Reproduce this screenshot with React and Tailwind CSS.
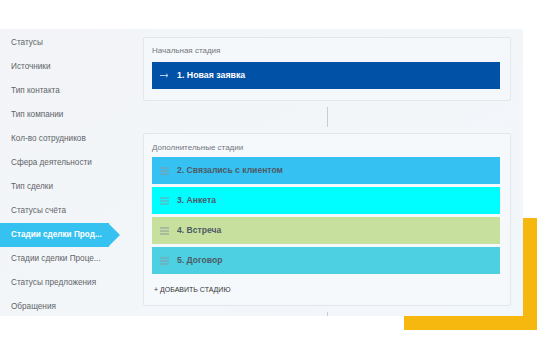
import React from "react";

const menu = [
  "Статусы",
  "Источники",
  "Тип контакта",
  "Тип компании",
  "Кол-во сотрудников",
  "Сфера деятельности",
  "Тип сделки",
  "Статусы счёта",
  "Стадии сделки Прод...",
  "Стадии сделки Проце...",
  "Статусы предложения",
  "Обращения",
];

const stages = [
  { name: "2. Связались с клиентом", color: "bg-[#36c1f3]" },
  { name: "3. Анкета", color: "bg-[#00fdff]" },
  { name: "4. Встреча", color: "bg-[#c7e09d]" },
  { name: "5. Договор", color: "bg-[#4dd0e2]" },
];

const Burger = () => (
  <svg width="9" height="8" viewBox="0 0 9 8" className="shrink-0">
    <path d="M0 1h9M0 4h9M0 7h9" stroke="#8a97a3" strokeWidth="1.1" />
  </svg>
);

const Arrow = () => (
  <svg width="9" height="5" viewBox="0 0 9 5" className="shrink-0">
    <path d="M0 2.5h8M6 0.7l2 1.8-2 1.8" stroke="#c9d8ec" strokeWidth="0.9" fill="none" />
  </svg>
);

const App = () => {
  return (
    <div
      className="relative w-[540px] h-[349px] bg-white overflow-hidden"
      style={{ fontFamily: '"Liberation Sans", Arial, sans-serif' }}
    >
      {/* yellow corner behind the panel */}
      <div className="absolute left-[523px] top-[218px] w-[14px] h-[112px] bg-[#f6b80f]" />
      <div className="absolute left-[404px] top-[316px] w-[133px] h-[14px] bg-[#f6b80f]" />

      <div className="relative mt-[29px] w-[523px] h-[287px] flex bg-gradient-to-br from-[#f2f4f7] via-[#f3f6f9] to-[#f2f7fc] overflow-hidden">
        <div className="w-[130px] shrink-0 pt-[2px]">
          {menu.map((item, i) =>
            i === 8 ? (
              <div key={i} className="relative h-[24px] flex items-center">
                <div className="absolute inset-y-0 left-0 w-[109px] bg-[#35c2f1]" />
                <div className="absolute top-0 left-[108px] w-0 h-0 border-y-[12px] border-y-transparent border-l-[12px] border-l-[#35c2f1]" />
                <span className="relative pl-[11px] text-[8.2px] font-bold text-white whitespace-nowrap">
                  {item}
                </span>
              </div>
            ) : (
              <div
                key={i}
                className="h-[24px] flex items-center pl-[11px] text-[8.2px] text-[#5f6469] whitespace-nowrap"
              >
                {item}
              </div>
            )
          )}
        </div>

        <div className="ml-[13px] pt-[8px] w-[368px] flex flex-col">
          <div className="h-[64px] border border-[#e3e7eb] rounded-[2px] bg-[#f5f8fb] pl-[8px] pr-[10px] flex flex-col">
            <div className="h-[24px] pt-[7px] text-[8px] text-[#72777c]">
              Начальная стадия
            </div>
            <div className="h-[27px] bg-[#0152a6] flex items-center pl-[8px] gap-[8px] text-white">
              <Arrow />
              <span className="text-[8.8px] font-bold">1. Новая заявка</span>
            </div>
          </div>

          <div className="h-[32px] flex justify-center items-center">
            <div className="w-px h-[20px] bg-[#c9cdd1]" />
          </div>

          <div className="h-[173px] border border-[#e3e7eb] rounded-[2px] bg-[#f6f9fc] pl-[8px] pr-[10px] flex flex-col">
            <div className="h-[23px] pt-[8px] text-[8px] text-[#72777c]">
              Дополнительные стадии
            </div>
            <div className="flex flex-col gap-[3px]">
              {stages.map((s) => (
                <div
                  key={s.name}
                  className={`h-[27px] ${s.color} flex items-center pl-[8px] gap-[8px]`}
                >
                  <Burger />
                  <span className="text-[8.6px] font-bold text-[#4e5a66]">
                    {s.name}
                  </span>
                </div>
              ))}
            </div>
            <div className="pt-[11px] pl-[2px] text-[7px] text-[#333] uppercase">
              + Добавить стадию
            </div>
          </div>

          <div className="h-[10px] flex justify-center items-end">
            <div className="w-px h-[4px] bg-[#c9cdd1]" />
          </div>
        </div>
      </div>
    </div>
  );
};

export default App;
